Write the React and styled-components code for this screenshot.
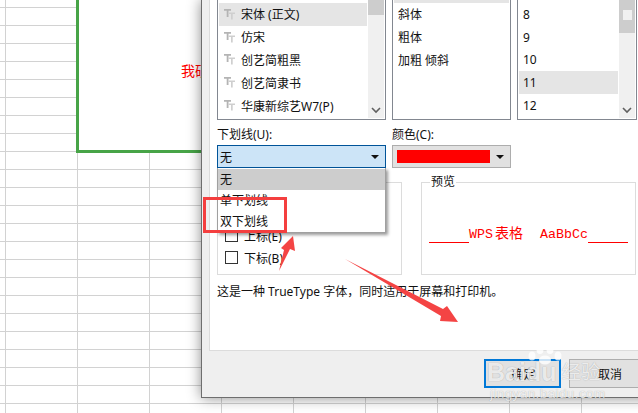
import React from 'react'
import styled, { createGlobalStyle } from 'styled-components'

const GlobalStyle = createGlobalStyle`
    html, body {
        margin: 0;
        padding: 0;
        background: #fff;
    }
    * {
        box-sizing: border-box;
    }
`;

const Page = styled.div`
    position: relative;
    width: 638px;
    height: 413px;
    overflow: hidden;
    font-family: 'Noto Sans', 'Noto Sans CJK SC', sans-serif;
    font-size: 12px;
    color: #111;
    background-color: #fff;
    background-image:
        linear-gradient(#d2d2d2 1px, transparent 1px),
        linear-gradient(90deg, #d2d2d2 1px, transparent 1px);
    background-size: 72px 18px;
    background-position: 5px 7px;
`;

/* chart floating on the sheet */
const Chart = styled.div`
    position: absolute;
    left: 76px;
    top: -4px;
    width: 200px;
    height: 157px;
    background: #fff;
    border-left: 3px solid #47a447;
    border-bottom: 3px solid #47a447;
`;

const ChartTitle = styled.span`
    position: absolute;
    left: 102px;
    top: 65px;
    color: #f00;
    font-size: 14px;
    line-height: 20px;
    white-space: nowrap;
`;

const Dialog = styled.div`
    position: absolute;
    left: 201px;
    top: 0;
    width: 460px;
    height: 398px;
    display: flex;
    flex-direction: column;
    background: #efefef;
    border-left: 1px solid #6e6e6e;
    border-bottom: 1px solid #6e6e6e;
    box-shadow: 0 0 13px rgba(0, 0, 0, 0.45);
    padding-left: 7px;
`;

const TabPanel = styled.div`
    height: 351px;
    flex: none;
    background: #fff;
    border-left: 1px solid #dcdcdc;
    border-bottom: 1px solid #dcdcdc;
    padding-left: 7px;
    display: flex;
    flex-direction: column;
`;

const ListRow = styled.div`
    display: flex;
    gap: 6px;
    height: 120px;
    flex: none;
`;

const ListBox = styled.div`
    position: relative;
    width: ${p => p.$width}px;
    height: 120px;
    flex: none;
    border: 1px solid #828790;
    border-top: 0;
    background: #fff;
    padding: 0 ${p => (p.$scroll ? 18 : 1)}px 0 1px;
    overflow: hidden;
`;

const Rows = styled.div`
    margin-top: ${p => p.$offset}px;
    display: flex;
    flex-direction: column;
`;

const Row = styled.div`
    height: 22.8px;
    display: flex;
    align-items: center;
    gap: 6px;
    padding-left: ${p => p.$indent}px;
    background: ${p => (p.$selected ? '#e5e5e5' : 'transparent')};
    white-space: nowrap;
`;

const ScrollBar = styled.div`
    position: absolute;
    right: 1px;
    top: 0;
    bottom: 1px;
    width: 16px;
    background: #f0f0f0;
    color: #606060;
`;

const Thumb = styled.div`
    height: ${p => p.$height}px;
    background: #cdcdcd;
    display: flex;
    justify-content: center;
    padding-top: 10px;
`;

const ThumbMark = styled.div`
    width: 9px;
    height: 10px;
    background: #f0f0f0;
`;

const ScrollDown = styled.svg`
    position: absolute;
    left: 3px;
    bottom: 4px;
`;

const FieldRow = styled.div`
    display: flex;
    margin-top: 6px;
    height: 42px;
    flex: none;
`;

const Field = styled.div`
    width: ${p => p.$width}px;
    flex: none;
    position: relative;
`;

const FieldLabel = styled.div`
    height: 19px;
    line-height: 17px;
`;

const Combo = styled.div`
    width: ${p => p.$width}px;
    height: 23px;
    display: flex;
    align-items: center;
    justify-content: space-between;
    padding: 0 6px 0 ${p => (p.$active ? 2 : 3)}px;
    background: ${p => (p.$active ? '#cce4f7' : '#e1e1e1')};
    border: 1px solid ${p => (p.$active ? '#005499' : '#adadad')};
`;

const ColorSwatch = styled.div`
    width: 93px;
    height: 13px;
    margin-left: 1px;
    background: #f00;
`;

const Caret = styled.div`
    width: 0;
    height: 0;
    border-left: 4px solid transparent;
    border-right: 4px solid transparent;
    border-top: 4px solid #111;
`;

const Dropdown = styled.div`
    position: absolute;
    z-index: 3;
    left: 0;
    top: 42px;
    width: 169px;
    height: 65px;
    background: #fff;
    border: 1px solid #a0a0a0;
    border-top: 0;
    box-shadow: 2px 2px 3px rgba(0, 0, 0, 0.4);
    padding-top: 1px;
`;

const DropdownItem = styled.div`
    height: 21px;
    line-height: 21px;
    padding-left: 2px;
    background: ${p => (p.$selected ? '#cdcdcd' : 'transparent')};
`;

const GroupRow = styled.div`
    display: flex;
    gap: 19px;
    margin-top: 14px;
    height: 93px;
    flex: none;
`;

const Group = styled.div`
    position: relative;
    width: ${p => p.$width}px;
    flex: none;
    border: 1px solid #dcdcdc;
`;

const GroupLegend = styled.span`
    position: absolute;
    left: 8px;
    top: -10px;
    padding: 0 1px;
    background: #fff;
    line-height: 17px;
`;

const CheckList = styled.div`
    display: flex;
    flex-direction: column;
    gap: 9px;
    padding: 46px 0 0 7px;
`;

const CheckRow = styled.div`
    display: flex;
    align-items: center;
    gap: 6px;
    height: 13px;
`;

const CheckBox = styled.div`
    width: 13px;
    height: 13px;
    border: 1px solid #333;
    background: #fff;
`;

const Preview = styled.div`
    display: flex;
    align-items: flex-end;
    justify-content: center;
    height: 61px;
    color: #f00;
    font-family: 'Liberation Mono', 'Noto Sans CJK SC', monospace;
    font-size: 13.3px;
    line-height: 18px;
    white-space: pre;
`;

const PreviewCjk = styled.span`
    font-size: 14px;
    margin: 0 1px 0 2px;
`;

const PreviewRule = styled.div`
    width: 40px;
    height: 1px;
    margin-bottom: 1px;
    background: #f00;
`;

const Note = styled.div`
    margin-top: 8px;
    line-height: 17px;
    white-space: nowrap;
`;

const Footer = styled.div`
    display: flex;
    gap: 8px;
    padding: 8px 0 0 275px;
`;

const Button = styled.div`
    width: ${p => (p.$primary ? 77 : 90)}px;
    height: 29px;
    display: flex;
    align-items: center;
    justify-content: ${p => (p.$primary ? 'center' : 'flex-start')};
    padding-left: ${p => (p.$primary ? 2 : 28)}px;
    background: #e1e1e1;
    border: ${p => (p.$primary ? '2px solid #0078d7' : '1px solid #adadad')};
`;

/* annotations pasted on top of the screenshot */
const Overlay = styled.svg`
    position: absolute;
    left: 0;
    top: 0;
    z-index: 4;
    pointer-events: none;
`;

const Watermark = styled.div`
    position: absolute;
    z-index: 5;
    left: 487px;
    top: 344px;
    width: 122px;
    color: rgba(255, 255, 255, 0.78);
    text-shadow: 0 0 1px rgba(0, 0, 0, 0.3);
    pointer-events: none;
`;

const WatermarkTitle = styled.div`
    display: flex;
    align-items: center;
    gap: 5px;
    margin-top: 17px;
    height: 22px;
    font-family: 'Liberation Sans', 'Noto Sans CJK SC', sans-serif;
    font-size: 25px;
    font-weight: bold;
    line-height: 22px;
    white-space: nowrap;
`;

const WatermarkCjk = styled.span`
    font-size: 19.5px;
    font-weight: normal;
`;

const WatermarkLink = styled.div`
    margin-top: 5px;
    padding-left: 3px;
    font-family: 'Liberation Sans', sans-serif;
    font-size: 13.5px;
    line-height: 12px;
    letter-spacing: 0.4px;
    white-space: nowrap;
`;

const WatermarkPaw = styled.svg`
    position: absolute;
    left: 41px;
    top: 1px;
`;

const FontGlyph = () => (
    <svg width="11" height="11" viewBox="0 0 11 11" fill="#b4b4b4">
        <path d="M0 0h7v1.8H4.5V8H2.7V1.8H0z" />
        <path d="M4.5 3.5h6.5v1.5H8.7V10.5H7V5H4.5z" fill="#cfcfcf" />
    </svg>
)

const Chevron = () => (
    <ScrollDown width="10" height="7" viewBox="0 0 10 7" fill="none" stroke="currentColor" strokeWidth="1.6">
        <path d="M1 1l4 4 4-4" />
    </ScrollDown>
)

const fonts = ['宋体 (正文)', '仿宋', '创艺简粗黑', '创艺简隶书', '华康新综艺W7(P)']
const styles = ['斜体', '粗体', '加粗 倾斜']
const sizes = ['8', '9', '10', '11', '12']

export default function App() {
    return (
        <Page>
            <GlobalStyle />
            <Chart>
                <ChartTitle>我硕</ChartTitle>
            </Chart>
            <Dialog>
                <TabPanel>
                    <ListRow>
                        <ListBox $width={169} $scroll>
                            <Rows $offset={3}>
                                {fonts.map((name, i) => (
                                    <Row key={name} $indent={5} $selected={i === 0}>
                                        <FontGlyph />
                                        <span>{name}</span>
                                    </Row>
                                ))}
                            </Rows>
                            <ScrollBar>
                                <Thumb $height={15} />
                                <Chevron />
                            </ScrollBar>
                        </ListBox>
                        <ListBox $width={119}>
                            <Rows $offset={-20}>
                                <Row $selected />
                                {styles.map(name => (
                                    <Row key={name} $indent={4}>{name}</Row>
                                ))}
                            </Rows>
                        </ListBox>
                        <ListBox $width={120} $scroll>
                            <Rows $offset={3}>
                                {sizes.map(size => (
                                    <Row key={size} $indent={4} $selected={size === '11'}>{size}</Row>
                                ))}
                            </Rows>
                            <ScrollBar>
                                <Thumb $height={33}><ThumbMark /></Thumb>
                                <Chevron />
                            </ScrollBar>
                        </ListBox>
                    </ListRow>
                    <FieldRow>
                        <Field $width={175}>
                            <FieldLabel>下划线(U):</FieldLabel>
                            <Combo $active $width={169}>
                                <span>无</span>
                                <Caret />
                            </Combo>
                            <Dropdown>
                                <DropdownItem $selected>无</DropdownItem>
                                <DropdownItem>单下划线</DropdownItem>
                                <DropdownItem>双下划线</DropdownItem>
                            </Dropdown>
                        </Field>
                        <Field $width={119}>
                            <FieldLabel>颜色(C):</FieldLabel>
                            <Combo $width={119}>
                                <ColorSwatch />
                                <Caret />
                            </Combo>
                        </Field>
                    </FieldRow>
                    <GroupRow>
                        <Group $width={185}>
                            <CheckList>
                                <CheckRow><CheckBox /><span>上标(E)</span></CheckRow>
                                <CheckRow><CheckBox /><span>下标(B)</span></CheckRow>
                            </CheckList>
                        </Group>
                        <Group $width={215}>
                            <GroupLegend>预览</GroupLegend>
                            <Preview>
                                <PreviewRule />
                                <span>WPS<PreviewCjk>表格</PreviewCjk>  AaBbCc</span>
                                <PreviewRule />
                            </Preview>
                        </Group>
                    </GroupRow>
                    <Note>这是一种 TrueType 字体，同时适用于屏幕和打印机。</Note>
                </TabPanel>
                <Footer>
                    <Button $primary>确定</Button>
                    <Button>取消</Button>
                </Footer>
            </Dialog>
            <Overlay width="638" height="413" viewBox="0 0 638 413">
                <rect x="204.5" y="198.5" width="81" height="33" fill="none" stroke="#f43f3f" strokeWidth="3" />
                <path d="M293 236L295 251 290 249 279 271 284 250 281 248z" fill="#f44444" />
                <path d="M345 259L443 309 447 306 458 322 440 321 441 316z" fill="#f44444" />
            </Overlay>
            <Watermark>
                <WatermarkPaw width="34" height="20" viewBox="0 0 34 20" fill="currentColor">
                    <ellipse cx="4" cy="11" rx="3.5" ry="4.5" />
                    <ellipse cx="12" cy="4.5" rx="3.5" ry="4.5" />
                    <ellipse cx="22" cy="4.5" rx="3.5" ry="4.5" />
                    <ellipse cx="30" cy="11" rx="3.5" ry="4.5" />
                    <ellipse cx="17" cy="15" rx="6" ry="4.5" />
                </WatermarkPaw>
                <WatermarkTitle>Baidu<WatermarkCjk>经验</WatermarkCjk></WatermarkTitle>
                <WatermarkLink>jingyan.baidu.com</WatermarkLink>
            </Watermark>
        </Page>
    )
}
